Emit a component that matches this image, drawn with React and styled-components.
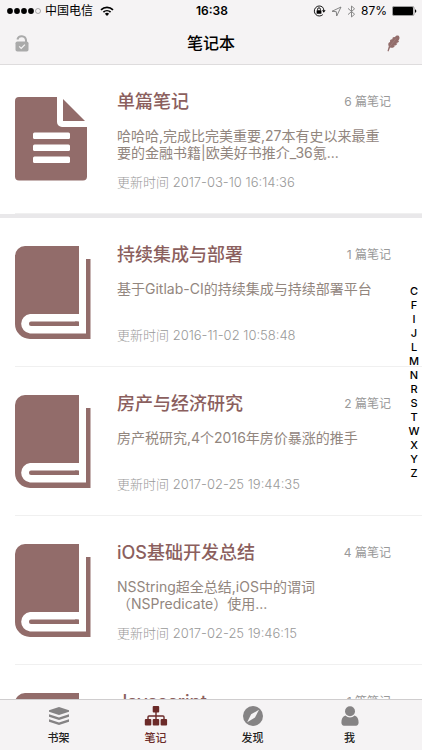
import React, { useState } from 'react';
import styled, { createGlobalStyle } from 'styled-components';

const notebooks = [
  {
    id: 1,
    title: '持续集成与部署',
    count: 1,
    summary: '基于Gitlab-CI的持续集成与持续部署平台',
    updatedAt: '2016-11-02 10:58:48',
  },
  {
    id: 2,
    title: '房产与经济研究',
    count: 2,
    summary: '房产税研究,4个2016年房价暴涨的推手',
    updatedAt: '2017-02-25 19:44:35',
  },
  {
    id: 3,
    title: 'iOS基础开发总结',
    count: 4,
    summary: 'NSString超全总结,iOS中的谓词（NSPredicate）使用...',
    updatedAt: '2017-02-25 19:46:15',
  },
  { id: 4, title: 'Javascript', count: 1 },
];

const singleNote = {
  title: '单篇笔记',
  count: 6,
  summary: '哈哈哈,完成比完美重要,27本有史以来最重要的金融书籍|欧美好书推介_36氪...',
  updatedAt: '2017-03-10 16:14:36',
};

const letters = 'CFIJLMNRSTWXYZ'.split('');

const tabs = [
  { name: '书架', Icon: ShelfIcon },
  { name: '笔记', Icon: TreeIcon },
  { name: '发现', Icon: CompassIcon },
  { name: '我', Icon: UserIcon },
];

const App = () => {
  const [activeTab, setActiveTab] = useState('笔记');

  return (
    <StPage>
      <GlobalStyle />
      <StHeader>
        <StatusBar />
        <StNavBar>
          <StIconButton aria-label="解锁">
            <LockIcon />
          </StIconButton>
          <StPageTitle>笔记本</StPageTitle>
          <StIconButton $right aria-label="写笔记">
            <FeatherIcon />
          </StIconButton>
        </StNavBar>
      </StHeader>

      <StMain>
        <StScroll>
          <StSection $divided>
            <NoteItem note={singleNote} icon={<DocumentIcon />} />
          </StSection>
          <StSection>
            {notebooks.map((note) => (
              <NoteItem key={note.id} note={note} icon={<BookIcon />} />
            ))}
          </StSection>
        </StScroll>
        <StIndex>
          {letters.map((letter) => (
            <StIndexButton key={letter}>{letter}</StIndexButton>
          ))}
        </StIndex>
      </StMain>

      <StTabBar>
        {tabs.map(({ name, Icon }) => (
          <StTab key={name} $isActive={activeTab === name} onClick={() => setActiveTab(name)}>
            <Icon />
            <span>{name}</span>
          </StTab>
        ))}
      </StTabBar>
    </StPage>
  );
};

export default App;

const StatusBar = () => (
  <StStatusBar>
    <StStatusGroup>
      <svg width="35" height="8" viewBox="0 0 35 8">
        {[3, 10, 17, 24].map((cx) => (
          <circle key={cx} cx={cx} cy="4" r="2.9" fill="#000" />
        ))}
        <circle cx="31" cy="4" r="2.5" fill="none" stroke="#777" strokeWidth="0.6" />
      </svg>
      <span>中国电信</span>
      <StWifi width="14" height="10" viewBox="0 0 14 10" fill="none" stroke="#000" strokeWidth="1.7">
        <path d="M1 3.9a8.6 8.6 0 0 1 12 0" />
        <path d="M3.4 6.2a5.2 5.2 0 0 1 7.2 0" />
        <path d="M7 9.9L4.9 7.7a3 3 0 0 1 4.2 0z" fill="#000" stroke="none" />
      </StWifi>
    </StStatusGroup>
    <StTime>16:38</StTime>
    <StStatusGroup $right>
      <svg width="13" height="12" viewBox="0 0 13 12">
        <path d="M9.6 2.2A5 5 0 1 0 9.8 9.6M10.8 5.4a5 5 0 0 0-1.2-3.2" fill="none" stroke="#000" strokeWidth="0.9" />
        <path d="M9 5.2h3.6L10.8 7.8z" />
        <rect x="3.6" y="5.3" width="4.8" height="3.5" rx="0.4" />
        <path d="M4.6 5.4V4.2a1.4 1.4 0 0 1 2.8 0v1.2" fill="none" stroke="#000" strokeWidth="0.9" />
      </svg>
      <svg width="11" height="11" viewBox="0 0 11 11" fill="none" stroke="#777" strokeWidth="0.9">
        <path d="M10 1L1 5.3l4.3.4.4 4.3z" strokeLinejoin="round" />
      </svg>
      <svg width="9" height="13" viewBox="0 0 9 13" fill="none" stroke="#888" strokeWidth="1">
        <path d="M1 3.4l6.6 5.8L4.5 12V1l3.1 2.8L1 9.6" />
      </svg>
      <span>87%</span>
      <svg width="25" height="10" viewBox="0 0 25 10">
        <rect x="0.4" y="0.4" width="21.6" height="9.2" rx="1.6" fill="none" stroke="#555" strokeWidth="0.6" />
        <rect x="1" y="1" width="20" height="8" rx="0.8" />
        <path d="M23 3.2c1.8.4 1.8 3.2 0 3.6z" />
      </svg>
    </StStatusGroup>
  </StStatusBar>
);

const NoteItem = ({ note, icon }) => (
  <StItem>
    <StCover>{icon}</StCover>
    <StItemBody>
      <StItemHead>
        <StItemTitle>{note.title}</StItemTitle>
        <StCount>{note.count} 篇笔记</StCount>
      </StItemHead>
      <StSummary>{note.summary}</StSummary>
      <StDate>{note.updatedAt && `更新时间 ${note.updatedAt}`}</StDate>
    </StItemBody>
  </StItem>
);

// 图标

function DocumentIcon() {
  return (
    <svg width="72" height="84" viewBox="0 0 72 84" fill="#926c6a">
      <path d="M4 0h38v25a5 5 0 0 0 5 5h25v49.5a4 4 0 0 1-4 4H4a4 4 0 0 1-4-4V4a4 4 0 0 1 4-4z" />
      <path d="M48 2l22 22H48z" />
      <g fill="#fff">
        <rect x="18" y="35.5" width="37" height="6.5" rx="1.5" />
        <rect x="18" y="47.5" width="37" height="6.5" rx="1.5" />
        <rect x="18" y="59.5" width="37" height="6.5" rx="1.5" />
      </g>
    </svg>
  );
}

function BookIcon() {
  return (
    <svg width="76" height="93" viewBox="0 0 76 93" fill="#926c6a">
      <path d="M10 0h54v68H15a9.8 9.8 0 0 0 0 19.5h56V13h4.5v80H15A15 15 0 0 1 0 78V10A10 10 0 0 1 10 0z" />
      <rect x="14" y="75.5" width="50" height="4.5" rx="2" />
      <rect x="60" y="75.5" width="4" height="4.5" />
    </svg>
  );
}

function LockIcon() {
  return (
    <svg width="14" height="18" viewBox="0 0 14 18">
      <path d="M2.4 5.4a4.4 4.4 0 0 1 8.6.6V9" fill="none" stroke="#aaa" strokeWidth="2" />
      <rect x="0.5" y="7.5" width="13" height="10" rx="1.8" fill="#aaa" />
      <path d="M4.2 12.4l2 2 3.7-3.8" fill="none" stroke="#f5f3f4" strokeWidth="1.3" />
    </svg>
  );
}

function FeatherIcon() {
  return (
    <svg width="13" height="17" viewBox="0 0 13 17" fill="#926c6a">
      <path d="M11.9.9C10.500 0 8.600.500 7.900 2.300 6.600 1.600 5.200 2.600 5.400 4.300 3.700 4 2.600 5.300 3.100 6.900 1.300 7.300.700 9.300 1.800 11.200L.5 15.900l1 .6 1.600-3.900c2 .6 4.300.1 4.700-1.500-.5.100-.9 0-1.200-.3 1.900.2 3.600-.9 3.700-2.500-.5.2-.9.100-1.300-.2 1.900.1 3.200-1 3-2.500-.3.100-.7 0-1-.2C12.600 4.600 13 2.300 11.900.900z" />
      <path d="M2.600 11.800L9.200 3.400" fill="none" stroke="#a98a88" strokeWidth="0.500" />
    </svg>
  );
}

function ShelfIcon() {
  return (
    <svg width="22" height="20" viewBox="0 0 22 20" fill="currentColor">
      <path d="M11 1l10 3.2v1.6L11 9 1 5.8V4.2z" />
      <path d="M1 8.3l10 3.2 10-3.2v2.4l-10 3.2-10-3.2z" />
      <path d="M1 13.3l10 3.2 10-3.2v2.4l-10 3.2-10-3.2z" />
    </svg>
  );
}

function TreeIcon() {
  return (
    <svg width="24" height="20" viewBox="0 0 24 20" fill="currentColor">
      <rect x="8.7" y="0" width="6.5" height="6.5" rx="1" />
      <rect x="0.8" y="13" width="6.5" height="6.5" rx="1" />
      <rect x="8.7" y="13" width="6.5" height="6.5" rx="1" />
      <rect x="16.6" y="13" width="6.5" height="6.5" rx="1" />
      <path d="M12 6v8M4 14v-3a1 1 0 0 1 1-1h14a1 1 0 0 1 1 1v3" fill="none" stroke="currentColor" strokeWidth="1.4" />
    </svg>
  );
}

function CompassIcon() {
  return (
    <svg width="22" height="20" viewBox="0 0 22 20" fill="currentColor">
      <circle cx="11" cy="10" r="10" />
      <path d="M17 3.8l-4 7.8-7.800 4.600 3.900-7.900z" fill="#f5f3f4" />
    </svg>
  );
}

function UserIcon() {
  return (
    <svg width="20" height="20" viewBox="0 0 20 20" fill="currentColor">
      <circle cx="10" cy="5.2" r="5" />
      <path d="M5.4 9.6a6.5 6.5 0 0 0 9.2 0c2.8.8 4 3.2 4 7 0 2-1 3.2-2.6 3.2H4c-1.600 0-2.600-1.200-2.600-3.200 0-3.800 1.200-6.200 4-7z" />
    </svg>
  );
}

//------------------

const GlobalStyle = createGlobalStyle`
  * {
    box-sizing: border-box;
  }
  body {
    margin: 0;
    color: #000;
    background: #fff;
    font-family: Inter, 'Noto Sans CJK SC', sans-serif;
  }
  h1, h2, p, ul {
    margin: 0;
    padding: 0;
  }
  button {
    padding: 0;
    border: none;
    background: none;
    font-family: inherit;
    cursor: pointer;
  }
  svg {
    display: block;
    flex-shrink: 0;
  }
`;

const StPage = styled.div`
  display: flex;
  flex-direction: column;
  height: 100vh;
`;

const StHeader = styled.header`
  background: #f5f3f4;
  border-bottom: 1px solid #dedcdd;
`;

const StStatusBar = styled.div`
  display: grid;
  grid-template-columns: 1fr auto 1fr;
  align-items: center;
  height: 20px;
  padding: 2px 5px 0 7px;
  font-size: 12px;
  line-height: 18px;
`;

const StStatusGroup = styled.div`
  display: flex;
  align-items: center;
  justify-content: ${({ $right }) => ($right ? 'flex-end' : 'flex-start')};
  gap: ${({ $right }) => ($right ? '5px' : '3px')};
`;

const StWifi = styled.svg`
  margin-left: 4px;
`;

const StTime = styled.span`
  font-weight: 600;
`;

const StNavBar = styled.div`
  display: grid;
  grid-template-columns: 1fr auto 1fr;
  align-items: center;
  height: 44px;
  padding: 2px 15px 0;
`;

const StPageTitle = styled.h1`
  font-size: 16px;
  font-weight: 500;
  line-height: 24px;
`;

const StIconButton = styled.button`
  display: flex;
  align-items: center;
  justify-self: ${({ $right }) => ($right ? 'end' : 'start')};
  padding-right: ${({ $right }) => ($right ? '7px' : '0')};
`;

const StMain = styled.main`
  position: relative;
  flex: 1;
  min-height: 0;
`;

const StScroll = styled.div`
  height: 100%;
  overflow: hidden;
`;

const StSection = styled.ul`
  list-style: none;
  border-bottom: ${({ $divided }) => ($divided ? '4px solid #e9e8ea' : 'none')};
`;

const StItem = styled.li`
  display: flex;
  align-items: center;
  margin-left: 15px;
  padding-right: 31px;
  border-bottom: 1px solid #f0f0f0;
`;

const StCover = styled.div`
  flex: 0 0 102px;
`;

const StItemBody = styled.div`
  flex: 1;
  min-width: 0;
  padding: 25px 0 22px;
`;

const StItemHead = styled.div`
  display: flex;
  justify-content: space-between;
  align-items: center;
  margin-bottom: 13px;
`;

const StItemTitle = styled.h2`
  font-size: 18px;
  font-weight: 500;
  line-height: 24px;
  color: #8b5f5e;
`;

const StCount = styled.span`
  font-size: 12px;
  line-height: 18px;
  color: #999;
`;

const StSummary = styled.p`
  min-height: 34px;
  margin-bottom: 12px;
  font-size: 14px;
  line-height: 17px;
  color: #92867e;
`;

const StDate = styled.p`
  min-height: 18px;
  font-size: 13px;
  font-weight: 300;
  line-height: 18px;
  color: #999;
`;

const StIndex = styled.nav`
  position: absolute;
  top: 0;
  right: 0;
  bottom: 0;
  display: flex;
  flex-direction: column;
  justify-content: center;
  width: 16px;
`;

const StIndexButton = styled.button`
  height: 14px;
  font-size: 11px;
  font-weight: 500;
  line-height: 14px;
  color: #000;
`;

const StTabBar = styled.nav`
  display: flex;
  height: 51px;
  padding: 0 24px 0 10px;
  background: #f5f3f4;
  border-top: 1px solid #cfcdce;
`;

const StTab = styled.button`
  flex: 1;
  display: flex;
  flex-direction: column;
  align-items: center;
  gap: 4px;
  padding-top: 6px;
  font-size: 11px;
  font-weight: 500;
  line-height: 16px;
  color: ${({ $isActive }) => ($isActive ? '#6b2a28' : '#858384')};
  span {
    color: ${({ $isActive }) => ($isActive ? '#6b2a28' : '#222')};
  }
`;
